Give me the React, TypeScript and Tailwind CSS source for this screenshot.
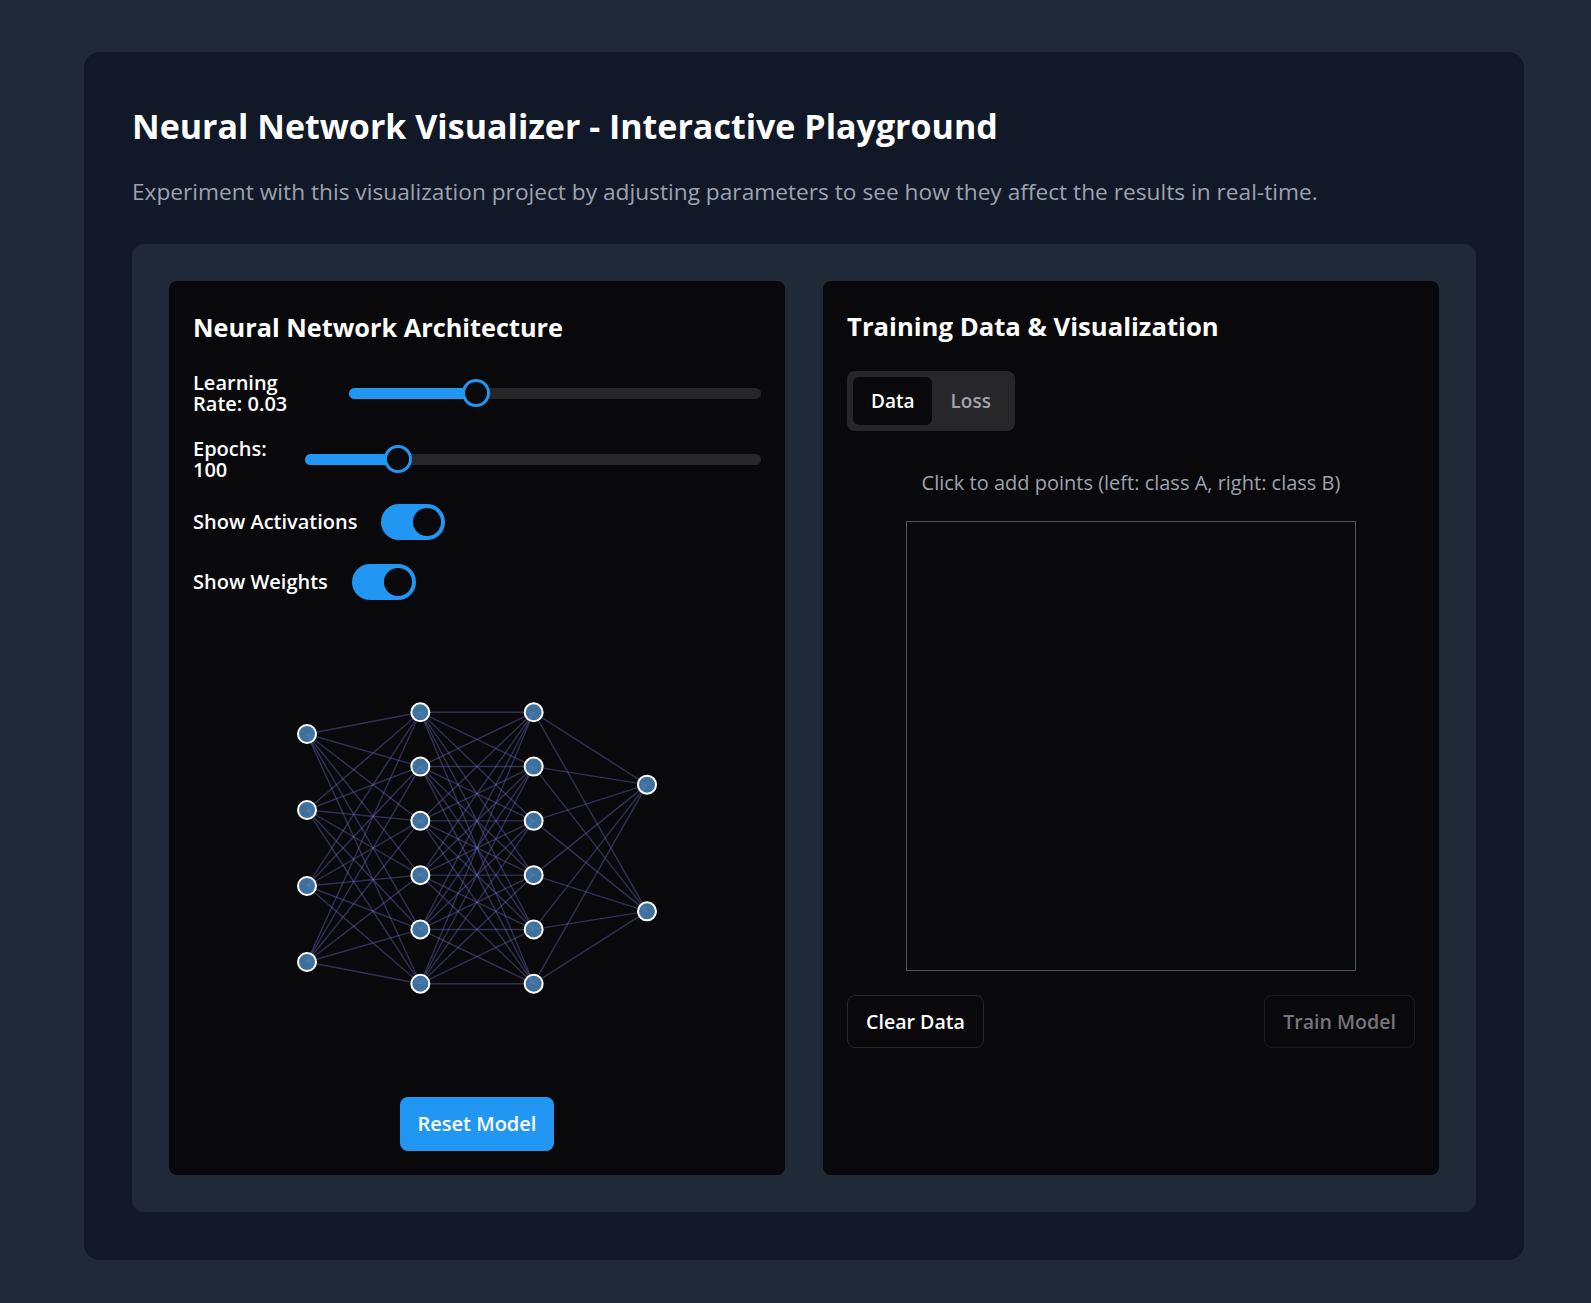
import React from "react";

const LAYERS = [4, 6, 6, 2];

function Network() {
  const W = 400;
  const H = 400;
  const xs = LAYERS.map((_, i) => 30 + (i * 340) / 3);
  const nodes = LAYERS.map((n, i) =>
    Array.from({ length: n }, (_, j) => ({ x: xs[i], y: 10 + ((j + 1) * 380) / (n + 1) }))
  );
  const edges: { x1: number; y1: number; x2: number; y2: number }[] = [];
  for (let i = 0; i < nodes.length - 1; i++) {
    for (const a of nodes[i]) for (const b of nodes[i + 1]) edges.push({ x1: a.x, y1: a.y, x2: b.x, y2: b.y });
  }
  return (
    <svg width={W} height={H} viewBox={`0 0 ${W} ${H}`} className="block">
      {edges.map((e, k) => (
        <line key={"e" + k} {...e} stroke="#7272d0" strokeOpacity={0.38} strokeWidth={1.4} />
      ))}
      {nodes.flat().map((p, k) => (
        <circle key={"n" + k} cx={p.x} cy={p.y} r={9} fill="#4682b4" fillOpacity={0.85} stroke="#ffffff" strokeWidth={2} />
      ))}
    </svg>
  );
}

function Slider({ pct }: { pct: number }) {
  return (
    <div className="relative flex-1 h-[28px] flex items-center">
      <div className="relative w-full h-[11px] rounded-full bg-[#27272a]">
        <div className="absolute left-0 top-0 h-full rounded-full bg-[#2196f3]" style={{ width: `${pct}px` }} />
      </div>
      <div
        className="absolute top-0 w-[28px] h-[28px] rounded-full border-[3px] border-[#2196f3] bg-[#09090b]"
        style={{ left: `${pct - 14}px` }}
      />
    </div>
  );
}

function Toggle() {
  return (
    <div className="w-16 h-9 rounded-full bg-[#2196f3] flex items-center justify-end px-[4px]">
      <div className="w-[28px] h-[28px] rounded-full bg-[#09090b]" />
    </div>
  );
}

export default function App() {
  return (
    <div className="min-h-screen bg-[#1f2937] pt-[52px] pl-[84px] pb-[44px] font-['Open_Sans','Noto_Sans',sans-serif]">
      <div className="w-[1440px] rounded-2xl bg-[#111827] p-12">
        <h1 className="mt-[4px] text-[34px] leading-[44px] font-bold text-white">
          Neural Network Visualizer - Interactive Playground
        </h1>
        <p className="mt-[29px] text-[22.7px] leading-[30px] text-[#9ca3af]">
          Experiment with this visualization project by adjusting parameters to see how they affect the results in real-time.
        </p>
        <div className="mt-[37px] rounded-xl bg-[#1f2937] p-[37px] grid grid-cols-2 gap-[38px]">
          {/* Left card */}
          <div className="rounded-lg bg-[#09090b] p-6 flex flex-col">
            <h2 className="mt-[6px] text-[25.3px] leading-[32px] font-bold text-white">Neural Network Architecture</h2>
            <div className="mt-[29px] flex items-center gap-4">
              <div className="w-[140px] text-[20px] leading-[21px] font-semibold text-white">
                <div>Learning</div>
                <div>Rate: 0.03</div>
              </div>
              <Slider pct={127} />
            </div>
            <div className="mt-6 flex items-center gap-4">
              <div className="w-[96px] text-[20px] leading-[21px] font-semibold text-white">
                <div>Epochs:</div>
                <div>100</div>
              </div>
              <Slider pct={93} />
            </div>
            <div className="mt-6 flex items-center gap-6">
              <span className="text-[20px] leading-[28px] font-semibold text-white">Show Activations</span>
              <Toggle />
            </div>
            <div className="mt-6 flex items-center gap-6">
              <span className="text-[20px] leading-[28px] font-semibold text-white">Show Weights</span>
              <Toggle />
            </div>
            <div className="mt-12 flex justify-center">
              <Network />
            </div>
            <div className="mt-[49px] flex justify-center">
              <button className="h-[54px] px-[18px] rounded-lg bg-[#2196f3] text-white text-[20px] font-semibold">
                Reset Model
              </button>
            </div>
          </div>

          {/* Right card */}
          <div className="rounded-lg bg-[#09090b] p-6 flex flex-col">
            <h2 className="mt-[6px] text-[25.7px] leading-[32px] font-bold text-white">Training Data &amp; Visualization</h2>
            <div className="mt-[28px] self-start inline-flex p-[6px] rounded-lg bg-[#27272a]">
              <div className="h-12 px-[18px] flex items-center rounded-md bg-[#09090b] text-white text-[19px] font-semibold">
                Data
              </div>
              <div className="h-12 px-[18px] flex items-center rounded-md text-[#a1a1aa] text-[19px] font-semibold">
                Loss
              </div>
            </div>
            <p className="mt-[38px] text-center text-[20px] leading-[28px] text-[#9ca3af]">
              Click to add points (left: class A, right: class B)
            </p>
            <div className="mt-6 flex justify-center">
              <div className="w-[450px] h-[450px] border border-[#4b5563] bg-[#09090b]" />
            </div>
            <div className="mt-6 flex justify-between">
              <button className="h-[53px] px-[18px] rounded-lg border border-[#27272a] text-white text-[19.6px] font-semibold">
                Clear Data
              </button>
              <button className="h-[53px] px-[18px] rounded-lg border border-[#1c1c1f] text-[#757577] text-[19.6px] font-semibold">
                Train Model
              </button>
            </div>
          </div>
        </div>
      </div>
    </div>
  );
}
